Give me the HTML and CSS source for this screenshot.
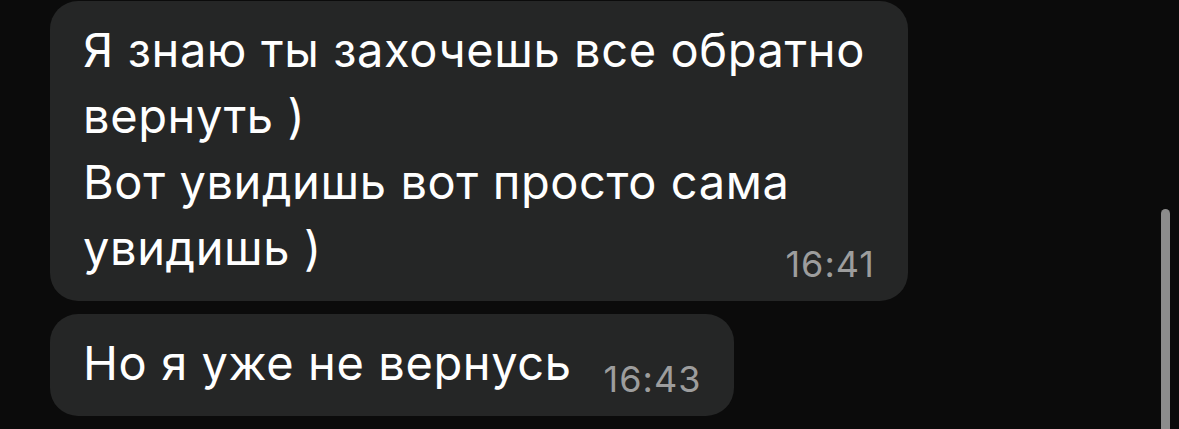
FILE: index.html
```html
<!DOCTYPE html>
<html lang="ru">
<head>
<meta charset="UTF-8">
<meta name="viewport" content="width=device-width, initial-scale=1.0">
<title>Чат</title>
<link rel="stylesheet" href="styles.css">
</head>
<body>
<div class="chat">
  <div class="message">
    Я знаю ты захочешь все обратно вернуть )<br>
    Вот увидишь вот просто сама увидишь )
    <span class="time">16:41</span>
  </div>

  <div class="message">
    Но я уже не вернусь
    <span class="time">16:43</span>
  </div>

  <div class="message next"></div>
</div>

<div class="scrollbar"></div>
</body>
</html>
```

FILE: styles.css
```css
:root {
  --fundo: #0b0b0b;
  --bolha: #252626;
  --texto: #ffffff;
  --hora: #9d9d9d;
  --barra: #8c8c8c;
}

body {
  background: var(--fundo);
  color: var(--texto);
  font-family: 'Inter', 'Liberation Sans', sans-serif;
  margin: 0;
  height: 429px;
  overflow: hidden;
}

.chat {
  display: flex;
  flex-direction: column;
  align-items: flex-start;
  gap: 13px;
  padding: 1px 0 0 50px;
}

.message {
  display: flow-root;
  max-width: 792px;
  background: var(--bolha);
  border-radius: 28px;
  padding: 16px 33px 19px 33px;
  font-size: 47px;
  line-height: 66px;
  letter-spacing: 0.6px;
}

.time {
  float: right;
  margin: 31px 0 0 32px;
  font-size: 36px;
  line-height: 36px;
  letter-spacing: 1px;
  color: var(--hora);
}

.next {
  width: 840px;
  height: 80px;
  padding: 0;
}

.scrollbar {
  position: fixed;
  right: 9px;
  top: 209px;
  width: 9px;
  height: 240px;
  border-radius: 5px;
  background: var(--barra);
}
```
